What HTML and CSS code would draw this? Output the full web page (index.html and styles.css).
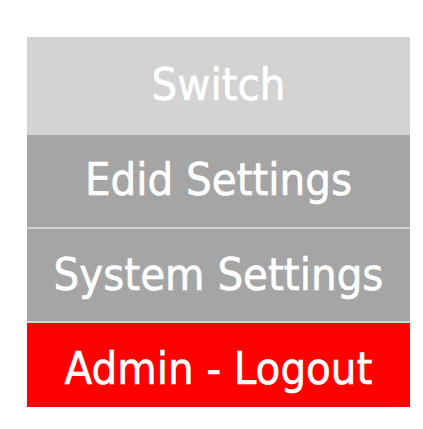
FILE: index.html
```html
<!DOCTYPE html>
<html lang="en">
<head>
  <meta charset="UTF-8">
  <title>Menu</title>
  <link rel="stylesheet" href="styles.css">
</head>
<body>
  <nav class="menu">
    <a class="menu-item switch" href="#">Switch</a>
    <a class="menu-item edid" href="#">Edid Settings</a>
    <a class="menu-item system" href="#">System Settings</a>
    <a class="menu-item logout" href="#">Admin - Logout</a>
  </nav>
</body>
</html>
```

FILE: styles.css
```css
body {
  margin: 0;
  background: #fff;
  font-family: 'DejaVu Sans Condensed', 'DejaVu Sans', sans-serif;
}

.menu {
  display: flex;
  flex-direction: column;
  gap: 2px;
  width: 383px;
  margin: 37px 0 0 27px;
  background-color: #d3d3d3;
}

.menu-item {
  display: flex;
  align-items: center;
  justify-content: center;
  color: #fff;
  text-decoration: none;
  font-size: 45px;
  line-height: 1;
  -webkit-text-stroke: 0.6px #fff;
  box-sizing: border-box;
}

.switch {
  height: 96px;
  background-color: #d3d3d3;
  padding-bottom: 2px;
}

.edid {
  height: 92px;
  background-color: #a5a5a5;
  padding-bottom: 4px;
}

.system {
  height: 92px;
  background-color: #a5a5a5;
  padding-bottom: 1px;
}

.logout {
  height: 84px;
  background-color: #ff0000;
  padding-top: 6px;
}
```
